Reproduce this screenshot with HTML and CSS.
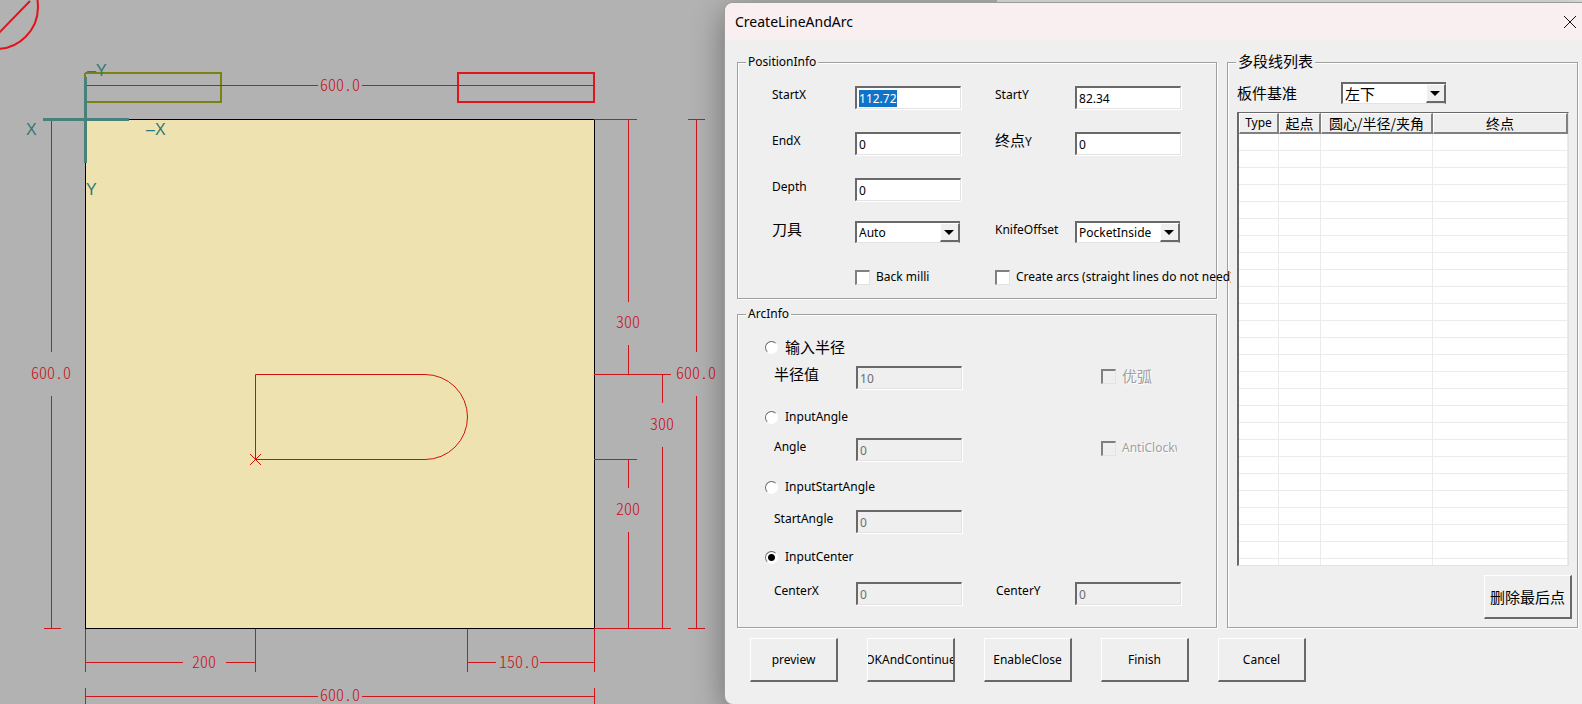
FILE: index.html
```html
<!DOCTYPE html>
<html lang="zh-CN">
<head>
<meta charset="utf-8">
<title>CreateLineAndArc</title>
<link rel="stylesheet" href="styles.css">
</head>
<body>
<main class="workspace">
  <svg class="drawing" width="1582" height="704" role="img" aria-label="Panel drawing">
    <!-- panel -->
    <rect class="panel" x="85.5" y="119.5" width="509" height="509"/>
    <!-- clamps -->
    <path class="clamp-olive" d="M85 73H221V102H85V73"/>
    <rect class="clamp-red" x="458" y="73" width="136" height="29"/>
    <!-- spindle mark -->
    <g class="clamp-red"><circle cx="-4" cy="7" r="42"/><path d="M-6 38L30 1"/></g>
    <!-- dimension lines -->
    <path class="dim" d="M86 85.5H318M362 85.5H594
      M51.5 121V352M51.5 396V628M44 628.5H61
      M594 119.5H637M628.5 120V302M628.5 345V374M594 374.5H671
      M662.5 374V403M662.5 447V628M594 459.5H637M628.5 459V488M628.5 532V628M594 628.5H671
      M688 119.5H705M696.5 119V352M696.5 396V628M688 628.5H705
      M85.5 629V672M255.5 629V672M85 662.5H183M226 662.5H255
      M467.5 629V672M594.5 629V672M467 662.5H496M540 662.5H594
      M85.5 688V704M594.5 688V704M85 696.5H318M362 696.5H594"/>
    <!-- milled slot -->
    <path class="slot" d="M255.5 459.5V374.5H425A42.5 42.5 0 0 1 425 459.5ZM250 454L261 465M261 454L250 465"/>
    <!-- axes -->
    <path class="axis" d="M85.5 77V163M43 119.5H129"/>
    <g class="axis-text">
      <text x="26" y="135">X</text>
      <text x="146" y="135">–X</text>
      <text x="87" y="76">–Y</text>
      <text x="86" y="195">Y</text>
    </g>
    <g class="dim-text">
      <text x="320" y="91">600.0</text>
      <text x="31" y="379">600.0</text>
      <text x="616" y="328">300</text>
      <text x="650" y="430">300</text>
      <text x="616" y="515">200</text>
      <text x="676" y="379">600.0</text>
      <text x="192" y="668">200</text>
      <text x="499" y="668">150.0</text>
      <text x="320" y="701">600.0</text>
    </g>
  </svg>
  <div class="strip"></div>

  <form class="dialog" role="dialog" aria-labelledby="title" onsubmit="return false">
    <header class="titlebar">
      <h1 id="title">CreateLineAndArc</h1>
      <button type="button" class="close" aria-label="Close"><svg width="14" height="14"><path d="M1 1L13 13M13 1L1 13"/></svg></button>
    </header>

    <div class="groups">
      <div class="left">
        <fieldset class="group">
          <legend>PositionInfo</legend>
          <div class="position">
            <label for="sx">StartX</label><input class="box" id="sx" value="112.72">
            <label for="sy">StartY</label><input class="box" id="sy" value="82.34">
            <label for="ex">EndX</label><input class="box" id="ex" value="0">
            <label for="ey"><span class="cjk">终点</span>Y</label><input class="box" id="ey" value="0">
            <label for="dp">Depth</label><input class="box" id="dp" value="0">
            <label for="kn" class="cjk first">刀具</label>
            <span class="combo"><select id="kn"><option>Auto</option></select><svg width="20" height="19"><path d="M3 6H13L8 11Z"/></svg></span>
            <label for="ko">KnifeOffset</label>
            <span class="combo"><select id="ko"><option>PocketInside</option></select><svg width="20" height="19"><path d="M3 6H13L8 11Z"/></svg></span>
            <label class="check back"><input type="checkbox"><span>Back milli</span></label>
            <label class="check arcs"><input type="checkbox"><span>Create arcs (straight lines do not need)</span></label>
          </div>
        </fieldset>

        <fieldset class="group">
          <legend>ArcInfo</legend>
          <div class="arc">
            <label class="check mode"><input type="radio" name="mode"><span class="cjk">输入半径</span></label>
            <label class="sub cjk" for="r">半径值</label><input class="box" id="r" value="10" disabled>
            <label class="check side"><input type="checkbox" disabled><span class="cjk">优弧</span></label>
            <label class="check mode"><input type="radio" name="mode"><span>InputAngle</span></label>
            <label class="sub" for="an">Angle</label><input class="box" id="an" value="0" disabled>
            <label class="check side"><input type="checkbox" disabled><span>AntiClockwise</span></label>
            <label class="check mode"><input type="radio" name="mode"><span>InputStartAngle</span></label>
            <label class="sub" for="sa">StartAngle</label><input class="box" id="sa" value="0" disabled>
            <label class="check mode"><input type="radio" name="mode" checked><span>InputCenter</span></label>
            <label class="sub" for="cx">CenterX</label><input class="box" id="cx" value="0" disabled>
            <label for="cy">CenterY</label><input class="box" id="cy" value="0" disabled>
          </div>
        </fieldset>
      </div>

      <fieldset class="group list-group">
        <legend class="cjk">多段线列表</legend>
        <div class="base">
          <label for="bs" class="cjk">板件基准</label>
          <span class="combo cjk"><select id="bs"><option>左下</option></select><svg width="20" height="19"><path d="M3 6H13L8 11Z"/></svg></span>
        </div>
        <div class="list">
          <table>
            <colgroup><col class="c-type"><col class="c-start"><col class="c-arc"><col></colgroup>
            <thead><tr><th>Type</th><th class="cjk">起点</th><th class="cjk">圆心/半径/夹角</th><th class="cjk">终点</th></tr></thead>
            <tbody>
              <tr><td></td><td></td><td></td><td></td></tr>
              <tr><td></td><td></td><td></td><td></td></tr>
              <tr><td></td><td></td><td></td><td></td></tr>
              <tr><td></td><td></td><td></td><td></td></tr>
              <tr><td></td><td></td><td></td><td></td></tr>
              <tr><td></td><td></td><td></td><td></td></tr>
              <tr><td></td><td></td><td></td><td></td></tr>
              <tr><td></td><td></td><td></td><td></td></tr>
              <tr><td></td><td></td><td></td><td></td></tr>
              <tr><td></td><td></td><td></td><td></td></tr>
              <tr><td></td><td></td><td></td><td></td></tr>
              <tr><td></td><td></td><td></td><td></td></tr>
              <tr><td></td><td></td><td></td><td></td></tr>
              <tr><td></td><td></td><td></td><td></td></tr>
              <tr><td></td><td></td><td></td><td></td></tr>
              <tr><td></td><td></td><td></td><td></td></tr>
              <tr><td></td><td></td><td></td><td></td></tr>
              <tr><td></td><td></td><td></td><td></td></tr>
              <tr><td></td><td></td><td></td><td></td></tr>
              <tr><td></td><td></td><td></td><td></td></tr>
              <tr><td></td><td></td><td></td><td></td></tr>
              <tr><td></td><td></td><td></td><td></td></tr>
              <tr><td></td><td></td><td></td><td></td></tr>
              <tr><td></td><td></td><td></td><td></td></tr>
              <tr><td></td><td></td><td></td><td></td></tr>
              <tr><td></td><td></td><td></td><td></td></tr>
            </tbody>
          </table>
        </div>
        <button type="button" class="push cjk">删除最后点</button>
      </fieldset>
    </div>

    <footer class="actions">
      <button type="button" class="push">preview</button>
      <button type="button" class="push">OKAndContinue</button>
      <button type="button" class="push">EnableClose</button>
      <button type="button" class="push">Finish</button>
      <button type="button" class="push">Cancel</button>
    </footer>
  </form>
</main>
<script src="main.js"></script>
</body>
</html>
```
FILE: styles.css
```css
* { box-sizing: border-box; }

body {
  margin: 0;
  background: #b2b2b2;
  color: #000;
  font: 12px/18px "Noto Sans", "Noto Sans CJK SC", sans-serif;
}

.cjk, .cjk select { font-family: "Noto Sans CJK SC", sans-serif; font-size: 15px; line-height: 16px; }

.workspace { position: relative; min-height: 100vh; overflow: hidden; }

/* drawing */
.drawing { display: block; position: absolute; left: 0; top: 0; }
.panel { fill: #eee3b0; stroke: #000; }
.clamp-olive { fill: none; stroke: #7b8214; stroke-width: 2; }
.clamp-red { fill: none; stroke: #e0141a; stroke-width: 2; }
.dim { fill: none; stroke: #d0141c; }
.slot { fill: none; stroke: #cc1408; }
.axis { stroke: #48807a; stroke-width: 3; }
.axis-text { fill: #2f7874; font: 16px "Liberation Sans", sans-serif; }
.dim-text {
  fill: #c8101a;
  font: 300 16px "Noto Sans CJK SC", sans-serif;
  font-feature-settings: "hwid";
}
.strip { position: absolute; left: 63%; right: 0; top: 0; height: 3px; background: #e2e2e2; }

/* dialog window */
.dialog {
  position: absolute;
  left: 45.83%;
  right: 0;
  top: 3px;
  min-height: calc(100vh - 3px);
  background: #efefef;
  border-radius: 8px 0 0 8px;
  box-shadow: 0 0 0 1px #9c9c9c, 0 8px 32px rgba(0, 0, 0, 0.4);
}
.titlebar {
  display: flex;
  align-items: center;
  justify-content: space-between;
  height: 37px;
  padding: 0 4px 0 10px;
  background: #f9eef0;
  border-radius: 8px 0 0 0;
}
.titlebar h1 { margin: 0; font-size: 14px; font-weight: 400; }
.close { display: flex; padding: 1px; border: 0; background: none; }
.close svg { fill: none; stroke: #111; stroke-width: 1; }

.groups {
  display: grid;
  grid-template-columns: 480fr 351fr;
  gap: 10px;
  padding: 13px 4px 0 12px;
}
.left { display: flex; flex-direction: column; gap: 6px; min-width: 0; position: relative; z-index: 1; }
.group {
  min-width: 0;
  margin: 0;
  padding: 0 8px;
  border: 1px solid #a0a0a0;
  box-shadow: 1px 1px 0 #fff, inset 1px 1px 0 #fff;
}
legend { height: 18px; line-height: 18px; padding: 0 2px; background: #efefef; }

.position {
  display: grid;
  grid-template-columns: 83px 140px 80px 106px;
  grid-template-rows: 46px 46px 43px 48px 15px;
  align-items: start;
  padding: 15px 0 14px 26px;
}
.first { grid-column: 1; }
.back { grid-column: 2; }
.arcs { grid-column: 3 / 5; width: 236px; }

.arc {
  display: grid;
  grid-template-columns: 91px 140px 79px 106px;
  grid-template-rows: 29px 41px 31px 39px 33px 37px 35px 23px;
  align-items: start;
  padding: 14px 0 22px 19px;
}
.mode { grid-column: 1 / 5; }
.sub { padding-left: 9px; }
.side { grid-column: 4; width: 76px; margin-left: 26px; }

/* controls */
.box {
  width: 106px;
  height: 23px;
  margin: 0;
  padding: 0 2px;
  border: 2px solid #696969;
  border-right: 1px solid #e3e3e3;
  border-bottom: 1px solid #e3e3e3;
  border-radius: 0;
  outline: 0;
  background: #fff;
  color: #000;
  font: inherit;
  box-shadow: 1px 1px 0 #fff;
}
.box:disabled { background: #efefef; color: #6d6d6d; }
.box::selection { background: #0f74c8; color: #fff; }

.combo { display: grid; width: 105px; }
.combo select, .combo svg { grid-area: 1 / 1; }
.combo select {
  appearance: none;
  width: 100%;
  height: 22px;
  padding: 0 2px;
  border: 2px solid #696969;
  border-bottom: 1px solid #e3e3e3;
  border-radius: 0;
  outline: 0;
  background: #fff;
  color: #000;
  font-family: inherit;
  font-size: inherit;
}
.combo svg {
  place-self: center end;
  border: 1px solid #fff;
  border-right: 2px solid #696969;
  border-bottom: 2px solid #696969;
  background: #efefef;
  pointer-events: none;
}

.check { display: flex; align-items: center; gap: 6px; height: 20px; overflow: hidden; white-space: nowrap; }
.position .check { height: 16px; }
.check input {
  appearance: none;
  flex: none;
  width: 15px;
  height: 15px;
  margin: 0;
  border: 2px solid #808080;
  border-right: 1px solid #e3e3e3;
  border-bottom: 1px solid #e3e3e3;
  background: #fff;
}
.check input:disabled { background: #efefef; }
.check input:disabled + span { color: #a0a0a0; text-shadow: 1px 1px 0 #fff; }
.check input[type="radio"] {
  width: 13px;
  height: 13px;
  border: 1px solid;
  border-color: #696969 #fff #fff #696969;
  border-radius: 50%;
}
.mode { gap: 7px; }
.check input[type="radio"]:checked { background: radial-gradient(circle, #000 3px, #fff 4px); }

/* point list */
.list-group { display: flex; flex-direction: column; padding: 0 5px 8px 8px; }
.base { display: grid; grid-template-columns: 104px 106px; align-items: center; padding: 11px 0 8px 1px; }
.list {
  flex: 1;
  contain: size;
  margin: 0 3px 0 1px;
  overflow: hidden;
  border: 1px solid #e3e3e3;
  border-left: 2px solid #696969;
  border-top: 1px solid #696969;
  background: #fff;
}
table { width: 100%; border-collapse: separate; border-spacing: 0; table-layout: fixed; }
.c-type { width: 40px; }
.c-start { width: 42px; }
.c-arc { width: 112px; }
th {
  height: 21px;
  padding: 0;
  border: 1px solid #fff;
  border-right: 2px solid #808080;
  border-bottom: 2px solid #808080;
  background: #efefef;
  font-weight: 400;
  line-height: 18px;
  white-space: nowrap;
}
th.cjk { font-size: 14px; line-height: 16px; }
td { height: 17px; padding: 0; border-right: 1px solid #ebebeb; border-bottom: 1px solid #ebebeb; }

.push {
  display: flex;
  align-items: center;
  justify-content: center;
  width: 88px;
  height: 44px;
  padding: 0;
  overflow: hidden;
  border: 1px solid #fff;
  border-right: 2px solid #696969;
  border-bottom: 2px solid #696969;
  border-radius: 0;
  background: #efefef;
  color: #000;
  font-family: inherit;
  font-size: 12px;
  white-space: nowrap;
}
.push.cjk { align-self: flex-end; margin-top: 9px; font-family: "Noto Sans CJK SC", sans-serif; font-size: 15px; }
.actions { display: flex; gap: 29px; padding: 10px 0 22px 25px; }
```
FILE: main.js
```js
const startX = document.getElementById('sx');
startX.focus();
startX.select();
```
